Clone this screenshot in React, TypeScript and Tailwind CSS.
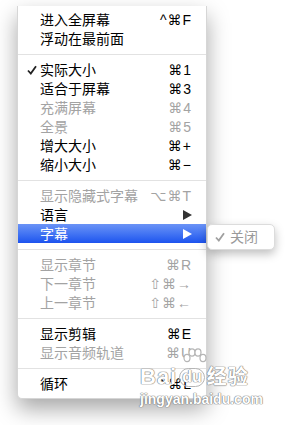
import type { ReactNode } from "react";

type Item =
  | { sep: true }
  | {
      sep?: false;
      label: string;
      key?: ReactNode;
      off?: boolean;
      check?: boolean;
      sub?: boolean;
      active?: boolean;
    };

const items: Item[] = [
  { label: "进入全屏幕", key: "^⌘F" },
  { label: "浮动在最前面" },
  { sep: true },
  { label: "实际大小", key: "⌘1", check: true },
  { label: "适合于屏幕", key: "⌘3" },
  { label: "充满屏幕", key: "⌘4", off: true },
  { label: "全景", key: "⌘5", off: true },
  { label: "增大大小", key: "⌘+" },
  { label: "缩小大小", key: "⌘−" },
  { sep: true },
  { label: "显示隐藏式字幕", key: "⌥⌘T", off: true },
  { label: "语言", sub: true },
  { label: "字幕", sub: true, active: true },
  { sep: true },
  { label: "显示章节", key: "⌘R", off: true },
  { label: "下一章节", key: "⇧⌘→", off: true },
  { label: "上一章节", key: "⇧⌘←", off: true },
  { sep: true },
  { label: "显示剪辑", key: "⌘E" },
  { label: "显示音频轨道", key: "⌘U", off: true },
  { sep: true },
  { label: "循环", key: "⌃⌘L" },
];

const font = "font-['Liberation_Sans','DejaVu_Sans','Noto_Sans_CJK_SC',sans-serif]";

function Arrow({ color }: { color: string }) {
  return (
    <svg width="9" height="10" viewBox="0 0 9 10">
      <path d="M0 0 L9 5 L0 10 Z" fill={color} />
    </svg>
  );
}

function Check({ color }: { color: string }) {
  return (
    <svg width="10" height="10" viewBox="0 0 10 10">
      <path d="M1 5.5 L3.8 8.5 L9 1.2" fill="none" stroke={color} strokeWidth="1.8" />
    </svg>
  );
}

// baidu paw print, drawn small and outlined like the watermark
function Paw() {
  return (
    <svg width="26" height="18" viewBox="0 0 26 18">
      <g fill="#fff" stroke="#b5b5b5" strokeWidth="1.2">
        <ellipse cx="5" cy="10" rx="3" ry="3.6" />
        <ellipse cx="10" cy="4.5" rx="3" ry="3.6" />
        <ellipse cx="16" cy="4.5" rx="3" ry="3.6" />
        <ellipse cx="21" cy="10" rx="3" ry="3.6" />
      </g>
    </svg>
  );
}

export default function App() {
  return (
    <div className={`relative h-[425px] w-[287px] overflow-hidden bg-white ${font}`}>
      <div className="pl-[17px] pt-[6px]">
        <div className="relative w-[190px] rounded-b-[5px] border border-t-0 border-[#d6d6d6] bg-white pt-[4px] pb-[5px] shadow-[0_10px_22px_rgba(0,0,0,0.35)]">
          {items.map((it, i) =>
            it.sep ? (
              <div key={i} className="flex h-[12px] items-center">
                <div className="h-px w-full bg-[#e2e2e2]" />
              </div>
            ) : (
              <div
                key={i}
                className={`relative flex h-[19px] items-center pr-[14px] text-[14px] leading-none ${
                  it.active
                    ? "bg-gradient-to-b from-[#6b93f6] to-[#1c52ee] text-white"
                    : it.off
                      ? "text-[#a3a3a3]"
                      : "text-black"
                }`}
              >
                <div className="flex w-[22px] justify-end pr-[3px]">
                  {it.check && <Check color="#222" />}
                </div>
                <span className="flex-1">{it.label}</span>
                {it.key && <span className="tracking-[1px]">{it.key}</span>}
                {it.sub && <Arrow color={it.active ? "#fff" : "#333"} />}
                {it.active && (
                  <div className="absolute top-0 left-[189px] flex h-[26px] w-[68px] items-center rounded-[5px] border border-[#dcdcdc] bg-white pl-[7px] text-[#9a9a9a] shadow-[0_4px_10px_rgba(0,0,0,0.25)]">
                    <Check color="#a0a0a0" />
                    <span className="ml-[5px] text-[14px]">关闭</span>
                  </div>
                )}
              </div>
            ),
          )}
        </div>
      </div>

      <div className="absolute top-[348px] left-[140px] flex flex-col items-start text-white [text-shadow:0_0_1px_#777,0_0_1px_#777,0_0_1px_#777]">
        <div className="ml-[42px]">
          <Paw />
        </div>
        <div className="flex items-center leading-none font-bold">
          <span className="text-[22px] tracking-[1px]">Bai</span>
          <span className="mx-[2px] rounded-full border-[1.5px] border-[#b5b5b5] px-[2px] pb-[1px] text-[16px]">du</span>
          <span className="text-[20px] tracking-[1px]">经验</span>
        </div>
        <div className="mt-[4px] text-[14px] leading-none font-bold">jingyan.baidu.com</div>
      </div>
    </div>
  );
}
